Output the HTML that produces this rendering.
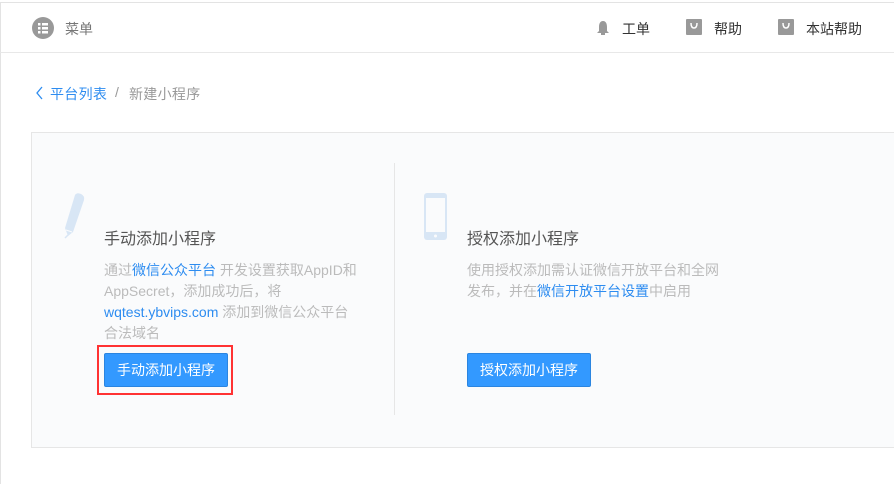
<!DOCTYPE html>
<html><head><meta charset="utf-8"><style>
*{margin:0;padding:0;box-sizing:border-box}
body{width:894px;height:484px;overflow:hidden;background:#fff;font-family:"Liberation Sans","Noto Sans CJK SC",sans-serif;position:relative}
.abs{position:absolute;white-space:nowrap}
.hdr{position:absolute;left:0;top:2px;width:894px;height:51px;border-top:1px solid #e3e3e3;border-bottom:1px solid #e8e8e8;border-left:1px solid #e3e3e3}
.panel{position:absolute;left:31px;top:132px;width:870px;height:316px;background:#fafbfc;border:1px solid #e6e6e6}
.t{font-size:16px;color:#555}
.d{font-size:14px;color:#bbb;line-height:21px}
.b{color:#2d8cf0}
.btn{position:absolute;background:#3399ff;color:#fff;font-size:14px;text-align:center;line-height:32px;border-radius:2px;border:1px solid #2b85e0}
</style></head><body>
<div class="hdr"></div>
<div style="position:absolute;left:0;top:53px;width:1px;height:431px;background:#e3e3e3"></div>
<svg class="abs" style="left:32px;top:17px" width="22" height="22"><circle cx="11" cy="11" r="11" fill="#999"/><rect x="6" y="6" width="2.5" height="2.5" fill="#fff"/><rect x="10" y="6" width="6" height="2.5" fill="#fff"/><rect x="6" y="10" width="2.5" height="2.5" fill="#fff"/><rect x="10" y="10" width="6" height="2.5" fill="#fff"/><rect x="6" y="14" width="2.5" height="2.5" fill="#fff"/><rect x="10" y="14" width="6" height="2.5" fill="#fff"/></svg>
<div class="abs" style="left:65px;top:19px;font-size:14px;color:#777">菜单</div>
<svg class="abs" style="left:596px;top:20px" width="14" height="16"><path d="M7 1C4 1 3 4 3 7V11L1 13H13L11 11V7C11 4 10 1 7 1Z" fill="#999"/><rect x="5" y="13" width="4" height="2" fill="#999"/></svg>
<div class="abs" style="left:622px;top:19px;font-size:14px;color:#333">工单</div>
<svg class="abs" style="left:686px;top:19px" width="16" height="16"><rect width="16" height="16" rx="1" fill="#999"/><path d="M5 4Q5 9 8 9Q11 9 11 4" stroke="#fff" stroke-width="1.5" fill="none"/></svg>
<div class="abs" style="left:714px;top:19px;font-size:14px;color:#333">帮助</div>
<svg class="abs" style="left:778px;top:19px" width="16" height="16"><rect width="16" height="16" rx="1" fill="#999"/><path d="M5 4Q5 9 8 9Q11 9 11 4" stroke="#fff" stroke-width="1.5" fill="none"/></svg>
<div class="abs" style="left:806px;top:19px;font-size:14px;color:#333">本站帮助</div>
<svg class="abs" style="left:35px;top:86px" width="9" height="14"><path d="M7 1L2 7L7 13" stroke="#2d8cf0" stroke-width="1.3" fill="none"/></svg>
<div class="abs" style="left:50px;top:84px;font-size:14px;color:#2d8cf0;letter-spacing:0.3px">平台列表</div>
<div class="abs" style="left:115px;top:84px;font-size:14px;color:#999">/</div>
<div class="abs" style="left:129px;top:84px;font-size:14px;color:#999;letter-spacing:0.3px">新建小程序</div>
<div class="panel"></div>
<div style="position:absolute;left:394px;top:163px;width:1px;height:252px;background:#e6e6e6"></div>
<svg class="abs" style="left:60px;top:192px" width="26" height="50"><path d="M15 3Q17 0 21 2Q25 4 24 8L13 40L8 44L5 36Z" fill="#d8e6f5"/><path d="M6 38L12 40" stroke="#fafbfc" stroke-width="1"/><path d="M5 46L8 43" stroke="#d8e6f5" stroke-width="1.5"/></svg>
<div class="abs t" style="left:104px;top:225px">手动添加小程序</div>
<div class="abs d" style="left:104px;top:260px">通过<span class="b">微信公众平台</span> 开发设置获取AppID和<br>AppSecret，添加成功后，将<br><span class="b">wqtest.ybvips.com</span> 添加到微信公众平台<br>合法域名</div>
<div style="position:absolute;left:97px;top:345px;width:136px;height:50px;border:2px solid #f33"></div>
<div class="btn" style="left:104px;top:353px;width:124px;height:34px">手动添加小程序</div>
<svg class="abs" style="left:424px;top:193px" width="23" height="48"><rect x="0" y="0" width="23" height="47" rx="3" fill="#d8e6f5"/><rect x="2" y="5" width="19" height="34" fill="#fafbfc"/><circle cx="11.5" cy="43" r="1.5" fill="#fafbfc"/></svg>
<div class="abs t" style="left:467px;top:225px">授权添加小程序</div>
<div class="abs d" style="left:467px;top:260px">使用授权添加需认证微信开放平台和全网<br>发布，并在<span class="b">微信开放平台设置</span>中启用</div>
<div class="btn" style="left:467px;top:353px;width:124px;height:34px">授权添加小程序</div>
</body></html>
